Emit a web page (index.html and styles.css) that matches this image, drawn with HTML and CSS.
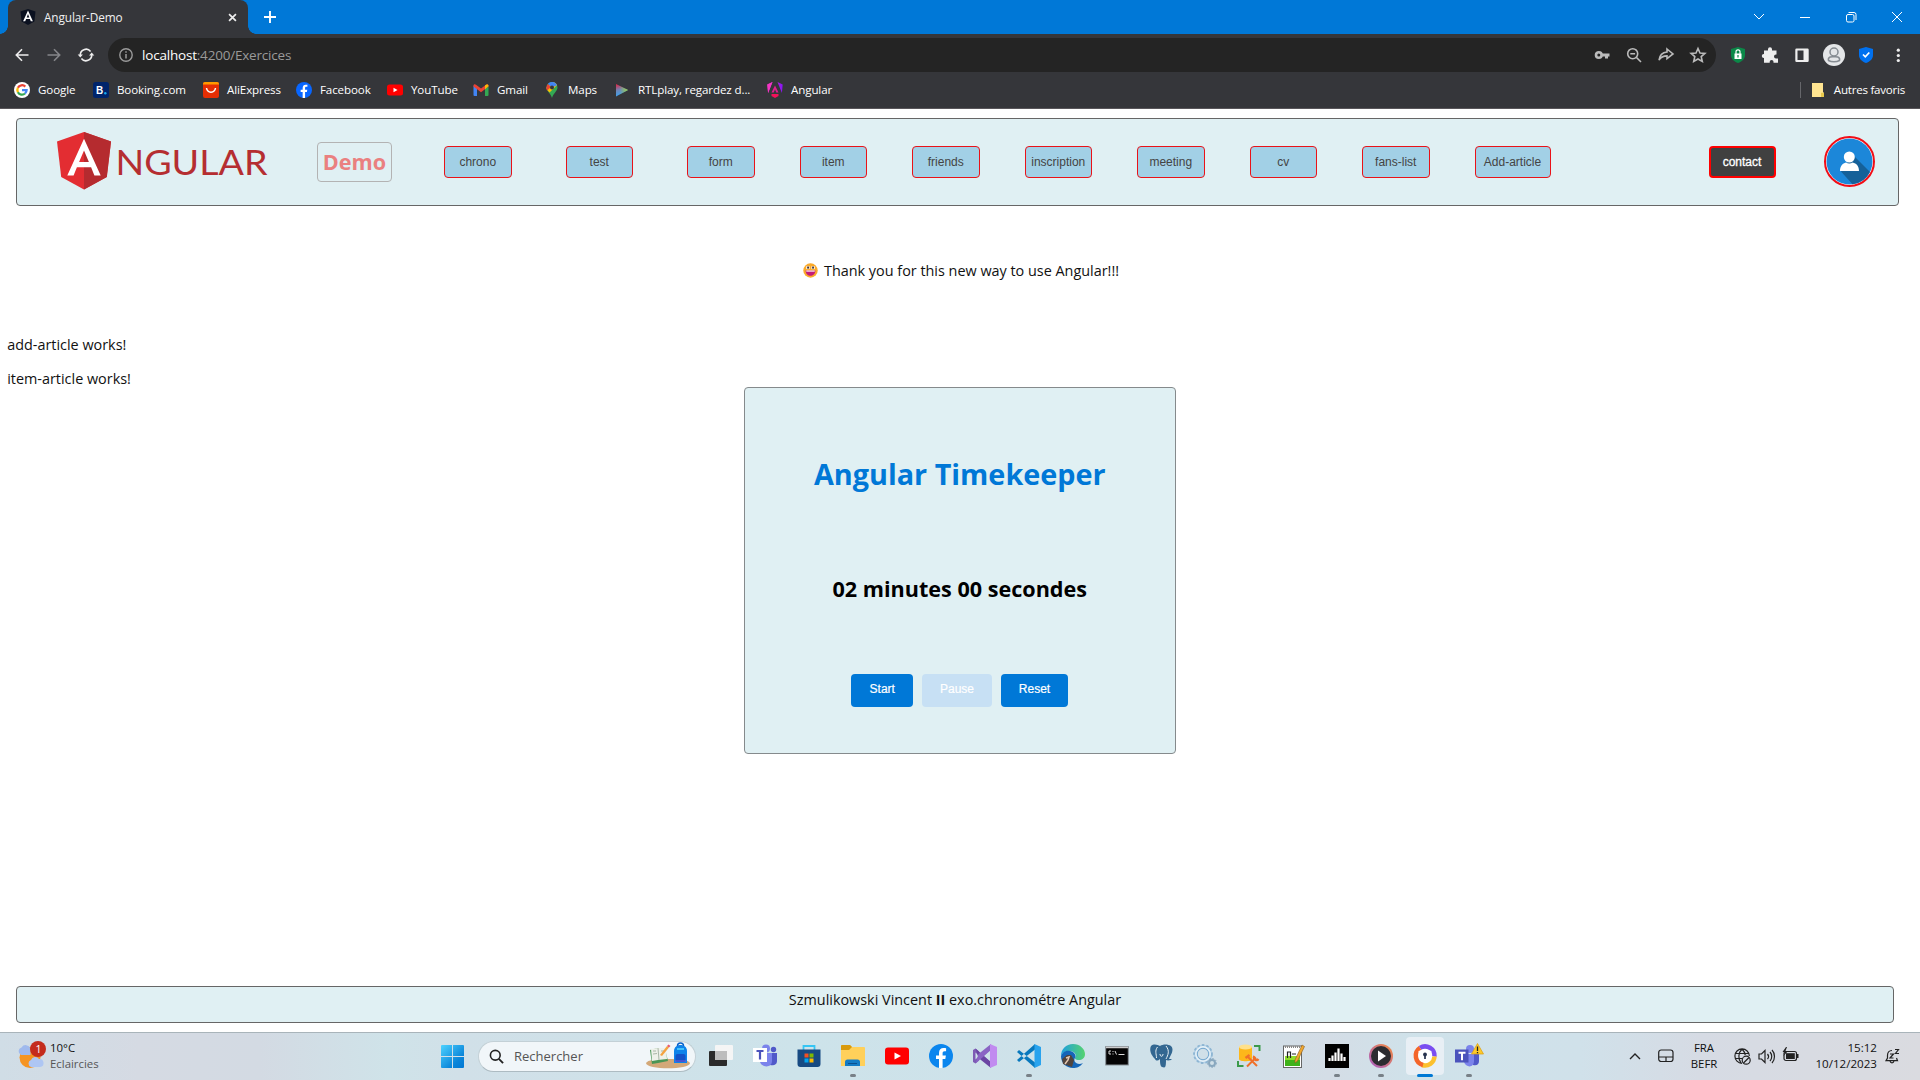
FILE: index.html
```html
<!DOCTYPE html>
<html lang="fr">
<head>
<meta charset="utf-8">
<title>Angular-Demo</title>
<link rel="stylesheet" href="styles.css">
</head>
<body>
<div class="screen">
<div class="tabstrip">
  <div class="tab">
    <svg class="i16" viewBox="0 0 16 16"><path d="M8 0l7.500 2.600-1.100 10L8 16l-6.400-3.400L.5 2.600z" fill="#0b1120"/><path d="M8 1.500L3.100 12.300h2.100l.9-2.400h3.800l.9 2.400h2.100zm0 3.600l1.300 3.300H6.700z" fill="#fff"/></svg>
    <span class="tab-title">Angular-Demo</span>
    <svg class="tab-close" viewBox="0 0 10 10"><path d="M1.200 1.200l7.600 7.600M8.800 1.200L1.200 8.800" stroke="#eee" stroke-width="1.900"/></svg>
  </div>
  <svg class="newtab" viewBox="0 0 12 12"><path d="M6 0v12M0 6h12" stroke="#fff" stroke-width="1.900"/></svg>
  <div class="wincontrols">
    <svg viewBox="0 0 12 12"><path d="M1 3l5 5 5-5" class="w"/></svg>
    <svg viewBox="0 0 12 12"><path d="M1 6.500h10" class="w"/></svg>
    <svg viewBox="0 0 12 12"><rect x="1.500" y="3.500" width="7.500" height="7.500" rx="1.500" class="w"/><path d="M3.500 1.500h5.500a2 2 0 0 1 2 2V9" class="w"/></svg>
    <svg viewBox="0 0 12 12"><path d="M1 1l10 10M11 1L1 11" class="w"/></svg>
  </div>
</div>
<div class="toolbar">
  <div class="navbtns">
    <svg viewBox="0 0 16 16"><path d="M14.500 8H2.500M8 2.300L2.300 8 8 13.700" class="s" stroke="#eee"/></svg>
    <svg viewBox="0 0 16 16"><path d="M1.500 8h12M8 2.300L13.700 8 8 13.700" class="s" stroke="#85868a"/></svg>
    <svg viewBox="0 0 16 16"><path d="M2.300 8.500A5.800 5.800 0 0 1 12.600 4.400M13.700 7.500A5.800 5.800 0 0 1 3.400 11.600" class="s" stroke="#eee"/><path d="M-.3 7.500h5.200L2.300 10.600zM16.300 8.500h-5.200l2.600-3.100z" fill="#eee"/></svg>
  </div>
  <div class="urlbar">
    <svg class="info" viewBox="0 0 14 14"><circle cx="7" cy="7" r="6.200" fill="none" stroke="#9a9a9a" stroke-width="1.400"/><path d="M7 6v4.500M7 3.300v1.500" stroke="#9a9a9a" stroke-width="1.500"/></svg>
    <span class="url"><b>localhost</b>:4200/Exercices</span>
    <div class="urlicons">
      <svg viewBox="0 0 16 16"><circle cx="4.800" cy="8" r="2.800" fill="none" stroke="#bbb" stroke-width="2.600"/><path d="M8 6.500h7.500v3h-1.500v2h-3v-2H8z" fill="#bbb"/></svg>
      <svg viewBox="0 0 16 16"><circle cx="6.700" cy="6.700" r="5" class="s" stroke="#bbb"/><path d="M10.500 10.500L15 15M4.300 6.700h4.800" class="s" stroke="#bbb"/></svg>
      <svg viewBox="0 0 16 16"><path d="M9 2l6 5-6 4.700V8.900C5.500 8.900 3 10 1 13c.5-4 3-7.500 8-8z" class="s" stroke="#bbb" stroke-width="1.300"/></svg>
      <svg viewBox="0 0 16 16"><path d="M8 1.500l2 4.500 4.900.4-3.700 3.200 1.100 4.900L8 12l-4.300 2.500 1.100-4.900L1.100 6.400 6 6z" class="s" stroke="#bbb" stroke-width="1.300"/></svg>
    </div>
  </div>
  <div class="exticons">
    <svg viewBox="0 0 16 16"><path d="M8 0l7 2v6c0 4-3 6.500-7 8-4-1.500-7-4-7-8V2z" fill="#0b8848"/><rect x="4.500" y="6.500" width="7" height="5.500" fill="#fff"/><path d="M6 7V4.800a2 2 0 0 1 4 0V7" fill="none" stroke="#fff" stroke-width="1.200"/><path d="M8 8v2.500" stroke="#0b8848" stroke-width="1.200"/></svg>
    <svg viewBox="0 0 16 16"><path d="M2 3.500h4V2.300a2 2 0 0 1 4 0v1.200h4.500v4H14a2 2 0 0 0 0 4h2v4.300h-4.500v-1a1.900 1.900 0 0 0-3.800 0v1H2V11h-.2a2 2 0 0 1 0-4H2z" fill="#eee"/></svg>
    <svg viewBox="0 0 16 16"><path d="M2.500 1.500h11a1.200 1.200 0 0 1 1.200 1.200v11a1.200 1.200 0 0 1-1.200 1.200h-11a1.200 1.200 0 0 1-1.200-1.200v-11a1.200 1.200 0 0 1 1.200-1.200zM3.500 3.500v9.500h6V3.500z" fill="#eee" fill-rule="evenodd"/></svg>
    <svg class="i22" viewBox="0 0 22 22"><circle cx="11" cy="11" r="11" fill="#e4e6e8"/><circle cx="11" cy="8" r="4" fill="none" stroke="#858b91" stroke-width="1.500"/><path d="M5.500 16.500c-1-4 3.500-4 5.500-3.800 2-.2 6.500-.2 5.500 3.800-3 1.700-8 1.700-11 0z" fill="none" stroke="#858b91" stroke-width="1.500"/></svg>
    <svg viewBox="0 0 16 16"><path d="M8 0l7 2v6c0 4-3 6.500-7 8-4-1.500-7-4-7-8V2z" fill="#0071f0"/><path d="M5 7.500l2.300 2.300L11.300 5.500" fill="none" stroke="#fff" stroke-width="1.700"/></svg>
    <svg viewBox="0 0 16 16"><g fill="#eee"><circle cx="8.300" cy="3.200" r="1.600"/><circle cx="8.300" cy="8.500" r="1.600"/><circle cx="8.300" cy="13.500" r="1.600"/></g></svg>
  </div>
</div>
<div class="bookmarks">
  <div class="bm bm-google"><svg class="i16" viewBox="0 0 16 16"><circle cx="8" cy="8" r="8" fill="#fff"/><g fill="none" stroke-width="2.300"><path d="M3.900 5.800A4.600 4.600 0 0 1 11.300 4.600" stroke="#ea4335"/><path d="M3.900 5.800A4.600 4.600 0 0 0 3.900 10.200" stroke="#fbbc05"/><path d="M3.900 10.200A4.600 4.600 0 0 0 11 11.500" stroke="#34a853"/><path d="M11 11.500A4.600 4.600 0 0 0 12.600 8.100H8" stroke="#4285f4"/></g></svg><span>Google</span></div>
  <div class="bm bm-booking"><svg class="i16" viewBox="0 0 16 16"><rect width="16" height="16" rx="2.500" fill="#00246b"/><text x="3" y="12" class="bk">B</text><circle cx="12.300" cy="11.300" r="1.200" fill="#17a9f0"/></svg><span>Booking.com</span></div>
  <div class="bm bm-ali"><svg class="i16" viewBox="0 0 16 16"><rect width="16" height="16" rx="2" fill="#e62e04"/><path d="M0 2.500V2a2 2 0 0 1 2-2h12a2 2 0 0 1 2 2v.5z" fill="#ff9a00"/><path d="M3.500 6c.8 5.500 8.200 5.500 9 0" fill="none" stroke="#fff" stroke-width="1.500"/></svg><span>AliExpress</span></div>
  <div class="bm bm-fb"><svg class="i16" viewBox="0 0 24 24"><circle cx="12" cy="12" r="12" fill="#0866ff"/><path d="M10 24v-9H7v-3.500h3V9c0-3.300 1.800-5 4.500-5 1 0 2 .1 2.600.3v3h-1.500c-1.500 0-2 .8-2 2v2.200h3.300L16.300 15h-2.700v9z" fill="#fff"/></svg><span>Facebook</span></div>
  <div class="bm bm-yt"><svg class="i16" viewBox="0 0 16 16"><rect y="2.500" width="16" height="11" rx="2.500" fill="#f00"/><path d="M6.500 5.700v4.600L10.500 8z" fill="#fff"/></svg><span>YouTube</span></div>
  <div class="bm bm-gmail"><svg class="i16" viewBox="0 0 16 16"><path d="M.5 3.500L4 6v8H1.500a1 1 0 0 1-1-1z" fill="#4285f4"/><path d="M12 6l3.500-2.500V13a1 1 0 0 1-1 1H12z" fill="#34a853"/><path d="M.5 4.500C.2 2 2 2 3 2.800L8 6.600l5-3.800c1-.8 2.800-.8 2.500 1.700L8 10.300z" fill="#ea4335"/><path d="M12 3.600l1-.8c1-.8 2.500-.5 2.500 1.200L12 7.200z" fill="#fbbc04"/></svg><span>Gmail</span></div>
  <div class="bm bm-maps"><svg class="i16" viewBox="0 0 16 16"><path d="M8 0a5.500 5.500 0 0 1 5.500 5.500C13.500 9 9.500 11 8 16 6.500 11 2.500 9 2.500 5.500A5.500 5.500 0 0 1 8 0z" fill="#34a853"/><path d="M8 0a5.500 5.500 0 0 1 5 3.200L5.500 10.500C4 9 2.500 7.500 2.500 5.500z" fill="#fbbc04"/><path d="M3.800 1.900L8 5.500l5-2.300A5.500 5.500 0 0 0 3.800 1.900z" fill="#4285f4"/><path d="M3.800 1.900L7 5 3 8.500C2 6.500 2.200 3.500 3.800 1.900z" fill="#ea4335"/><circle cx="8" cy="5.500" r="2" fill="#35363a"/></svg><span>Maps</span></div>
  <div class="bm bm-rtl"><svg class="i16" viewBox="0 0 16 16"><defs><linearGradient id="rtl" x1="0" y1="0" x2=".3" y2="1"><stop offset="0" stop-color="#e8203c"/><stop offset=".5" stop-color="#6f86b8"/><stop offset="1" stop-color="#36a5f5"/></linearGradient><linearGradient id="rt2"><stop offset=".3" stop-color="#a0c040" stop-opacity="0"/><stop offset="1" stop-color="#a8dc3c"/></linearGradient></defs><path d="M2 2l12 6-12 6.500z" fill="url(#rtl)"/><path d="M2 2l12 6-12 6.500z" fill="url(#rt2)"/></svg><span>RTLplay, regardez d...</span></div>
  <div class="bm bm-ng"><svg class="i16" viewBox="0 0 16 16"><defs><linearGradient id="ng"><stop offset="0" stop-color="#f02fc0"/><stop offset="1" stop-color="#8514f5"/></linearGradient></defs><path d="M5.500 0L.3 2.500l.8 8.500zM10.500 0l5.200 2.500-.8 8.500z" fill="url(#ng)"/><path d="M.3 2.500L5.500 0l-4.400 11z" fill="#f436c4"/><path d="M8 3.500l3.500 7H9.300L8 7.500l-1.300 3H4.500z" fill="#e01f90"/><path d="M4.500 12h7v2L8 16l-3.500-2z" fill="#f5105a"/></svg><span>Angular</span></div>
  <div class="bm-other"><svg class="folder" viewBox="0 0 12 14"><path d="M0 0h11v9.500h1V14H0z" fill="#ffe591"/><path d="M9 14V9.800h3V14z" fill="#e8c94c"/></svg><span>Autres favoris</span></div>
</div>

<main class="page">
  <header class="site-header">
    <svg class="logo" viewBox="0 0 212 58"><path d="M27 0l27 9.500-4.200 35.500L27 57.500 4.200 45 0 9.500z" fill="#e32d32"/><path d="M27 0l27 9.500-4.200 35.500L27 57.500z" fill="#b52b2f"/><path d="M27 6.700L10.300 43.500h6.300l3.300-8.300h14.200l3.300 8.300h6.300zM27 18.500L31.900 30H22.100z" fill="#fff" fill-rule="evenodd"/><text x="58.500" y="42.500" textLength="152" lengthAdjust="spacingAndGlyphs" class="wordmark">NGULAR</text></svg>
    <div class="demo">Demo</div>
    <nav class="links">
      <a class="l1">chrono</a><a class="l2">test</a><a class="l3">form</a><a>item</a><a>friends</a><a>inscription</a><a>meeting</a><a>cv</a><a>fans-list</a><a class="wide">Add-article</a>
    </nav>
    <a class="contact">contact</a>
    <svg class="avatar" viewBox="0 0 51 51"><circle cx="25.500" cy="25.500" r="24.500" fill="#fff" stroke="#f20d16" stroke-width="2"/><circle cx="25.500" cy="25.500" r="23" fill="#1c87d9"/><path d="M29 19L46 36A23 23 0 0 1 28.500 48.300L17 35.500z" fill="#156199"/><circle cx="25.300" cy="21" r="5.500" fill="#fff"/><path d="M16 35c0-5 2.500-7.500 6-8.500 2 1.200 4.600 1.200 6.600 0 4 1 6.400 3.500 6.400 8.500z" fill="#fff"/></svg>
  </header>
  <p class="thanks"><svg class="emoji" viewBox="0 0 16 16"><circle cx="8" cy="8" r="7.700" fill="#fbaa2b"/><rect x="3.500" y="3.500" width="3.500" height="3" fill="#fff"/><rect x="9" y="3.500" width="3.500" height="3" fill="#fff"/><rect x="4.500" y="3.800" width="1.800" height="2.200" fill="#302028"/><rect x="9.800" y="3.800" width="1.800" height="2.200" fill="#302028"/><path d="M2.800 8h10.400c0 7.500-10.400 7.500-10.400 0z" fill="#c41c78"/><path d="M3.500 8h9v1.200h-9z" fill="#fff"/></svg><span>Thank you for this new way to use Angular!!!</span></p>
  <p class="works">add-article works!</p>
  <p class="works second">item-article works!</p>
  <section class="card">
    <h1>Angular Timekeeper</h1>
    <h2>02 minutes 00 secondes</h2>
    <div class="buttons"><button class="start">Start</button><button class="pause">Pause</button><button class="reset">Reset</button></div>
  </section>
  <footer class="site-footer"><span>Szmulikowski Vincent <b>II</b> exo.chronométre Angular</span></footer>
</main>

<div class="taskbar">
  <div class="weather">
    <svg class="weather-icon" viewBox="0 0 28 28"><circle cx="13" cy="16.500" r="10.500" fill="#f59422"/><path d="M4 14a4 4 0 0 1 .5-7.500 5 5 0 0 1 9 1V14z" fill="#9fb9ed"/><path d="M14 26a3.700 3.700 0 0 1 0-7 4.500 4.500 0 0 1 8-1 4 4 0 0 1 1 8z" fill="#aec6f3"/><circle cx="21" cy="8" r="8" fill="#c42b1c"/><text x="18.500" y="12" class="badge">1</text></svg>
    <div class="wtext"><span>10°C</span><span class="muted">Eclaircies</span></div>
  </div>
  <div class="apps">
    <svg class="start-icon" viewBox="0 0 23 23"><defs><linearGradient id="win" x1="0" y1="0" x2="1" y2="1"><stop offset="0" stop-color="#4cd2ff"/><stop offset=".7" stop-color="#0a85d9"/><stop offset="1" stop-color="#0078d4"/></linearGradient></defs><path d="M0 1a1 1 0 0 1 1-1h10v11H0zM12 0h10a1 1 0 0 1 1 1v10H12zM0 12h11v11H1a1 1 0 0 1-1-1zM12 12h11v10a1 1 0 0 1-1 1H12z" fill="url(#win)"/></svg>
    <div class="search">
      <svg class="lens" viewBox="0 0 16 16"><circle cx="6.700" cy="6.700" r="5.200" fill="none" stroke="#222" stroke-width="1.700"/><path d="M10.500 10.500L15 15" stroke="#222" stroke-width="2"/></svg>
      <span>Rechercher</span>
      <svg class="school" viewBox="0 0 44 26"><path d="M0 20c2-3 9-4 22-4s20 1 22 4c0 7-44 7-44 0z" fill="#d3a878"/><path d="M4 7l8-2 7 1 3 12-10 2-6 1z" fill="#4a9655"/><path d="M5 6l7-1 8 0 1 11-9 1-6 1z" fill="#eef1ea"/><path d="M12 5l1 12M7 8l3 0M7 11l4-.5M15 8l3 0" stroke="#aab7a8"/><path d="M14 12L21 3l2 1.500L16 13z" fill="#f4a340"/><path d="M21 3l1.500-1.500L24.500 3 23 4.500z" fill="#e85a70"/><path d="M28 8c0-8 13-8 13 0v12h-13z" fill="#0c83ea"/><path d="M31.500 3c0-4 6-4 6 0" fill="none" stroke="#0b63c9" stroke-width="1.500"/><rect x="29.500" y="11" width="10" height="8" rx="2" fill="#1252c8"/><path d="M31 6h7" stroke="#45c2fa" stroke-width="2"/><path d="M29 18h11" stroke="#7b54d8"/></svg>
    </div>
    <div class="pins">
      <div class="pin"><svg viewBox="0 0 24 24"><rect x="6" y="1" width="18" height="15" rx="1" fill="#f5f5f5"/><rect y="7" width="18" height="15" rx="1" fill="#2b2b2b"/><path d="M6 7h12v9H6z" fill="#bdbdbd"/></svg></div>
      <div class="pin"><svg viewBox="0 0 24 24"><circle cx="13" cy="4.500" r="4" fill="#7b83eb"/><circle cx="20.500" cy="5.500" r="2.700" fill="#5059c9"/><path d="M15 9h9v8c0 4-4 5-7 4z" fill="#5059c9"/><path d="M7 9h12v8c0 7-10 7-12 1z" fill="#7b83eb"/><rect y="4" width="14" height="14" fill="#fff"/><path d="M3.500 7h7M7 7v8.500" stroke="#4b53bc" stroke-width="2.200"/></svg></div>
      <div class="pin"><svg viewBox="0 0 24 24"><path d="M6.500 6V2h11v4" fill="none" stroke="#35c5f4" stroke-width="1.800"/><path d="M.5 5.500h23V20a3 3 0 0 1-3 3h-17a3 3 0 0 1-3-3z" fill="#174a82"/><path d="M7.500 9.500h4v4h-4z" fill="#f25022"/><path d="M12.500 9.500h4v4h-4z" fill="#7fba00"/><path d="M7.500 14.500h4v4h-4z" fill="#00a4ef"/><path d="M12.500 14.500h4v4h-4z" fill="#ffb900"/></svg></div>
      <div class="pin run"><svg viewBox="0 0 24 24"><path d="M0 2a1 1 0 0 1 1-1h8l2 2h12a1 1 0 0 1 1 1v18H0z" fill="#ffd05a"/><path d="M0 6V2a1 1 0 0 1 1-1h8l2 2-3 3z" fill="#d99a0c"/><path d="M4 22v-4a2.500 2.500 0 0 1 2.500-2.500h10A2.500 2.500 0 0 1 19 18v4z" fill="#137bc5"/><path d="M7 19.500h9" stroke="#0a4f8f"/></svg></div>
      <div class="pin"><svg viewBox="0 0 24 24"><rect y="3.500" width="24" height="17" rx="3" fill="#f00"/><path d="M9.500 8.500v7L16 12z" fill="#fff"/></svg></div>
      <div class="pin"><svg viewBox="0 0 24 24"><circle cx="12" cy="12" r="12" fill="#0b86ee"/><path d="M10 24v-9H7v-3.500h3V9c0-3.300 1.800-5 4.500-5 1 0 2 .1 2.600.3v3h-1.500c-1.500 0-2 .8-2 2v2.200h3.300L16.300 15h-2.700v9z" fill="#fff"/></svg></div>
      <div class="pin"><svg viewBox="0 0 24 24"><path d="M0 6l2.500-1.500L6 7.500v9L2.500 19.500 0 18z" fill="#7e5bb5"/><path d="M2.500 8.500v7L6 12z" fill="#cfe1ea"/><path d="M2.500 4.500L18 18v6L5.500 14z" fill="#6a45a3"/><path d="M2.500 19.500L18 6V0L5.500 10z" fill="#8a64c4"/><path d="M17 0l7 3v18l-7 3z" fill="#c18bf0"/><path d="M17 7.500v9L11.500 12z" fill="#cfe1ea"/></svg></div>
      <div class="pin run"><svg viewBox="0 0 24 24"><path d="M0 8l2-2 16 12.500V24zM0 16l2 2L18 5.500V0z" fill="#0878bd"/><path d="M17.500 0L24 3v18l-6.500 3z" fill="#29a3ee"/></svg></div>
      <div class="pin"><svg viewBox="0 0 24 24"><defs><linearGradient id="eg"><stop offset="0" stop-color="#1f9fdf"/><stop offset="1" stop-color="#55d36e"/></linearGradient></defs><path d="M0 12C0 5 5 0 12 0c7 0 12 5 12 10 0 4-3 6-6 6-3.500 0-5-1.500-3.500-3C16 11 13 7 9 7S2 8 0 12z" fill="url(#eg)"/><path d="M0 12c2-5 6-6 9-5 3 .5 6 3 5.500 6C11 17 16 22 22 19c-3 4-6 5-10 5C5 24 0 19 0 12z" fill="#1565b8"/><path d="M1 15l5-4 4 0 3 5-2 7-9-3z" fill="#51443e"/><path d="M5 14l3-1-1 3-3 4" stroke="#e5c9b2" stroke-width="1.500" fill="none"/></svg></div>
      <div class="pin"><svg viewBox="0 0 24 24"><rect x=".7" y="2.500" width="22.600" height="18.500" fill="#050505" stroke="#8a9399"/><path d="M1 3.500h22" stroke="#ccc" stroke-width="1.500"/><path d="M6 7h-2v3h2M8 7v1M8 9.500v1M10 7l1.500 3.500M13.500 10.500h6" stroke="#ddd" fill="none"/></svg></div>
      <div class="pin"><svg viewBox="0 0 24 24"><path d="M2 2C5-1 9 1 11 2c3-2 8-2 11 0 4 4-1 10-2 13l3 0c-2 2-5 1.500-6 1 0 8-1 8-4 7-2-1-2-5-2-8-2 2-4 2-5 0C2 11 0 6 2 2z" fill="#336791"/><path d="M8.500 3c-3 4-1 7-1 11M17 2c4 5 2 9 0 13M11 10c0 3 3 3 3 0" fill="none" stroke="#e8f1f5" stroke-width="1"/></svg></div>
      <div class="pin"><svg viewBox="0 0 24 24"><circle cx="10" cy="10" r="7.500" fill="none" stroke="#b3d0e6" stroke-width="4"/><circle cx="10" cy="10" r="8.900" fill="none" stroke="#8eb6d3" stroke-width="2" stroke-dasharray="2.500 2"/><circle cx="10" cy="10" r="5.700" fill="none" stroke="#77a9d0"/><circle cx="10" cy="10" r="7.200" fill="none" stroke="#e5f1f8" stroke-width="1.500"/><circle cx="19" cy="19" r="3" fill="none" stroke="#88a7be" stroke-width="2"/><circle cx="19" cy="19" r="4.500" fill="none" stroke="#88a7be" stroke-dasharray="1.500 1.500"/></svg></div>
      <div class="pin"><svg viewBox="0 0 24 24"><path d="M2 3v12c0 3 13 3 13 0V3z" fill="#fdb71a"/><ellipse cx="8.500" cy="3" rx="6.500" ry="2.500" fill="#ffe08a"/><path d="M17 2h5.500v5M1 17v5h5.500" fill="none" stroke="#3b9a4a" stroke-width="2"/><path d="M10 12l10 10M19 13.500L10 22.500" fill="none" stroke="#f0702a" stroke-width="2"/><path d="M8.500 14l4-3M17.500 12a2.500 2.500 0 0 0 4 3" fill="none" stroke="#f0702a" stroke-width="2.300"/></svg></div>
      <div class="pin"><svg viewBox="0 0 24 24"><rect x="2.500" y="2" width="18" height="21.500" fill="#fff" stroke="#666"/><path d="M4 12h15v10H4z" fill="#8fdc2a"/><path d="M4 16h15v6H4z" fill="#3eb21a"/><path d="M4 3h15" stroke="#888" stroke-dasharray="1 1" stroke-width="2"/><path d="M6.500 14V8h3v6M11 10h4" fill="none" stroke="#222" stroke-width="1.200"/><path d="M14 16L21 1l2.500 1.500L16.500 17 14 19z" fill="#f0a72e" stroke="#8a5a20" stroke-width=".6"/></svg></div>
      <div class="pin run"><svg viewBox="0 0 24 24"><rect width="24" height="24"/><path d="M4.500 14v3M7.500 11.500V17M10.500 8.500V17M13.500 4.500V17M16.500 9.500V17M19.500 13v4" stroke="#fff" stroke-width="2.200"/></svg></div>
      <div class="pin run"><svg viewBox="0 0 24 24"><defs><linearGradient id="mp" x1="1" y1="0" x2="0" y2="1"><stop offset="0" stop-color="#f58b3c"/><stop offset="1" stop-color="#a65bc8"/></linearGradient></defs><circle cx="12" cy="12" r="12" fill="url(#mp)"/><circle cx="12" cy="12" r="10" fill="#2c2c30"/><path d="M9 6.500v11l8-5.500z" fill="#fff"/></svg></div>
      <div class="pin active"><svg viewBox="0 0 24 24"><circle cx="12" cy="12" r="9" fill="#fff"/><g fill="none" stroke-width="4.500"><path d="M7 3.900A9.500 9.500 0 0 1 21.500 12.500" stroke="#7a4df0"/><path d="M21.500 12.500A9.500 9.500 0 0 1 9 21" stroke="#fcc02e"/><path d="M10 21A9.500 9.500 0 0 1 7 3.900" stroke="#f4652a"/></g><path d="M12 5l6.500 2c0 5-1 8.500-6.500 12-5.500-3.500-6.500-7-6.500-12z" fill="#fff"/><circle cx="12" cy="10.500" r="1.900" fill="#26324d"/><path d="M12 11v4" stroke="#26324d" stroke-width="1.700"/></svg></div>
      <div class="pin run"><svg class="teams2" viewBox="0 0 28 24"><circle cx="15" cy="5" r="4" fill="#7b83eb"/><path d="M18 10h6v7c0 4-3 5-6 4z" fill="#5059c9"/><path d="M9 10h10v7c0 7-8 7-10 1z" fill="#7b83eb"/><rect y="5.500" width="13.500" height="13" fill="#4b53bc"/><path d="M3.500 8.700h7M7 8.700v7.500" stroke="#fff" stroke-width="2"/><path d="M22.500-.5L28.500 10h-12z" fill="#ffc928" stroke="#d89b10" stroke-width=".7"/><path d="M22.500 2.500V7M22.500 8v1.200" stroke="#222" stroke-width="1.300"/></svg></div>
    </div>
  </div>
  <div class="tray">
    <svg class="chev" viewBox="0 0 12 8"><path d="M1 7l5-5 5 5" fill="none" stroke="#222" stroke-width="1.400"/></svg>
    <svg class="pad" viewBox="0 0 16 14"><rect x=".7" y="1" width="14.300" height="11.500" rx="2.500" class="t"/><path d="M1 8h14M8 8v4.500" class="t"/></svg>
    <div class="lang"><span>FRA</span><span>BEFR</span></div>
    <svg class="i17" viewBox="0 0 17 17"><path d="M8 15.300A7.200 7.200 0 1 1 15.300 8M1 5.500h14M1 10.500h7M8 1C4 5 4 11 7 15M8 1c2 2 3 4 3.200 6" class="t"/><circle cx="12.200" cy="12.200" r="4" class="t"/><path d="M9.500 15l5.500-5.500" class="t"/></svg>
    <svg class="spk" viewBox="0 0 17 17"><path d="M1 6h2.500L7 2.500v12L3.500 11H1zM9.500 6c1.300 1.500 1.300 3.500 0 5M12 4c2.300 2.500 2.300 6.500 0 9M14 2c3.300 3.500 3.300 9.500 0 13" class="t"/></svg>
    <svg class="i17 bat" viewBox="0 0 17 17"><rect x="2" y="4.500" width="12.500" height="9" rx="2" class="t"/><rect x="4" y="6.200" width="8.800" height="5.800" fill="#222"/><path d="M15 7h1.500v4H15z" fill="#222"/><path d="M4 0L.5 5h2.300L1.500 9 6 4H3.500L5 0z" fill="#222"/></svg>
    <div class="clock"><span>15:12</span><span>10/12/2023</span></div>
    <svg class="bell" viewBox="0 0 15 16"><path d="M7 2.500c-3 0-4.500 2-4.500 5V10L1 12.700h11.500L11.500 10M5 13c.5 2.500 3.500 2.500 4 0M5 6h3.500L5 10h3.500M10 1.500h3.500L10.500 5.500H14" class="t"/></svg>
  </div>
</div>
</div>
</body>
</html>
```
FILE: styles.css
```css
* { box-sizing: border-box; }
body { margin: 0; background: #fff; font-family: "Open Sans", sans-serif; color: #111; }
svg { display: block; flex: none; overflow: visible; }
p, h1, h2 { margin: 0; }
.screen { width: 1920px; height: 1080px; display: flex; flex-direction: column; overflow: hidden; }
.i16 { width: 16px; height: 16px; }
.i17 { width: 17px; height: 17px; }
.s { fill: none; stroke-width: 1.6; }
.w { fill: none; stroke: #fff; stroke-width: 1; }
.t { fill: none; stroke: #222; stroke-width: 1.2; }

/* Browser chrome */
.tabstrip { height: 34px; background: #0078d7; display: flex; align-items: center; padding-left: 8px; flex: none; }
.tab { position: relative; width: 240px; height: 34px; background: #35363a; border-radius: 8px 8px 0 0; display: flex; align-items: center; padding: 0 11px 0 12px; }
.tab::before, .tab::after { content: ""; position: absolute; bottom: 0; width: 8px; height: 8px; }
.tab::before { left: -8px; background: radial-gradient(circle at 0 0, transparent 7.5px, #35363a 8px); }
.tab::after { right: -8px; background: radial-gradient(circle at 100% 0, transparent 7.5px, #35363a 8px); }
.tab-title { margin: -1px 0 0 8px; flex: 1; font-size: 11.8px; color: #f0f0f0; letter-spacing: -.1px; white-space: nowrap; }
.tab-close { width: 9px; height: 9px; }
.newtab { width: 12px; height: 12px; margin-left: 16px; }
.wincontrols { margin-left: auto; display: flex; gap: 34px; padding-right: 17px; height: 28px; align-items: center; }
.wincontrols svg { width: 12px; height: 12px; }
.toolbar { height: 42px; background: #35363a; display: flex; padding-top: 4px; align-items: flex-start; flex: none; }
.navbtns { width: 108px; height: 34px; display: flex; align-items: center; gap: 16px; padding-left: 14px; }
.navbtns svg, .urlicons svg { width: 16px; height: 16px; }
.urlbar { width: 1608px; height: 34px; border-radius: 17px; background: #242424; display: flex; align-items: center; padding: 0 10px 0 11px; }
.info { width: 14px; height: 14px; }
.url { margin-left: 9px; font-size: 13.5px; color: #9a9a9a; letter-spacing: -.2px; }
.url b { font-weight: 400; color: #fff; }
.urlicons { margin-left: auto; display: flex; gap: 16px; }
.exticons { flex: 1; height: 34px; display: flex; align-items: center; padding-left: 6px; }
.exticons svg { width: 16px; height: 16px; margin: 0 8px; }
.exticons .i22 { width: 22px; height: 22px; margin: 0 5px; }
.bookmarks { height: 33px; background: #35363a; border-bottom: 1px solid #59565a; display: flex; align-items: center; padding: 0 15px 4px 14px; font-size: 11.6px; color: #fff; flex: none; }
.bm { display: flex; align-items: center; gap: 8px; white-space: nowrap; letter-spacing: -.12px; }
.bm span, .bm-other span { margin-top: -2px; }
.bm-google { width: 79px; } .bm-booking { width: 110px; } .bm-ali { width: 93px; } .bm-fb { width: 91px; }
.bm-yt { width: 86px; } .bm-gmail { width: 71px; } .bm-maps { width: 70px; } .bm-rtl { width: 153px; }
.bk { font: bold 10px "Liberation Sans", sans-serif; fill: #fff; }
.bm-other { margin-left: auto; height: 16px; border-left: 1px solid #66676b; padding-left: 11px; display: flex; align-items: center; gap: 10px; letter-spacing: -.25px; }
.folder { width: 12px; height: 14px; }

/* Page */
.page { flex: 1; display: flex; flex-direction: column; font-size: 14.4px; }
.site-header { margin: 9px 0 0 16px; width: 1883px; height: 88px; flex: none; background: #e0f0f3; border: 1px solid #666; border-radius: 4px; display: flex; align-items: center; padding-left: 40px; }
.logo { width: 212px; height: 58px; margin-top: -2px; }
.wordmark { font: 35px Lato, sans-serif; fill: #b52e31; }
.demo { width: 75px; height: 40px; margin-left: 48px; border: 1px solid #b3b3b3; border-radius: 4px; color: #ea8080; font-weight: 700; font-size: 21.6px; line-height: 38px; text-align: center; }
.links { display: flex; margin-left: 52px; gap: 45px; }
.links a { width: 67.5px; height: 32px; border: 1px solid #ea1218; border-radius: 4px; background: #a2d0e6; color: #444; font: 12px/31px "Liberation Sans", sans-serif; text-align: center; }
.links .l1, .links .l2 { margin-right: 9px; }
.links .wide { width: 76px; }
.contact { width: 67px; height: 32px; margin-left: 158px; border: 2px solid #f00; border-radius: 4px; background: #404040; color: #fff; font: 12px/28px "Liberation Sans", sans-serif; text-align: center; -webkit-text-stroke: .3px #fff; }
.avatar { width: 51px; height: 51px; margin: -2px 0 0 48px; }
.thanks { margin-top: 54px; height: 20px; display: flex; align-items: center; gap: 6px; padding-left: 803px; white-space: nowrap; }
.emoji { width: 15px; height: 15px; }
.works { margin: 56px 0 0 7.2px; height: 18px; line-height: 18px; }
.works.second { margin-top: 16px; }
.card { margin: -1px 0 0 744px; width: 431.5px; height: 367px; background: #e0f0f3; border: 1px solid #858a8c; border-radius: 4px; display: flex; flex-direction: column; align-items: center; flex: none; }
.card h1 { margin-top: 66px; font-size: 28.8px; line-height: 40px; color: #0078d7; }
.card h2 { margin-top: 80px; font-size: 21.6px; line-height: 30px; color: #000; }
.buttons { margin-top: 70px; display: flex; gap: 8.5px; }
.buttons button { height: 32.5px; padding: 0 0 2px; border: 0; border-radius: 4px; background: #0078d7; color: #fff; font: 12px "Liberation Sans", sans-serif; -webkit-text-stroke: .2px #fff; }
.buttons .start { width: 62px; }
.buttons .pause { width: 70.5px; background: #c7e0f4; }
.buttons .reset { width: 67.5px; }
.site-footer { margin: auto 0 9px 16px; width: 1878px; height: 37px; border: 1px solid #666; border-radius: 4px; background: #e0f0f3; text-align: center; line-height: 25px; flex: none; }

/* Taskbar */
.taskbar { height: 48px; border-top: 1px solid #a9b4ba; display: flex; align-items: center; flex: none; padding-bottom: 1px; background: linear-gradient(90deg, #d0dde6, #d5dae3 140px, #d3dae3 260px, #cfe3e9 390px, #d1e0e8 460px, #cde3ea 800px, #cfe1e9 1150px, #d4dde6 1330px, #cfe2ea 1420px, #d0e1ea 1580px, #d6dbe4 1700px, #dadbe0); }
.weather { width: 441px; display: flex; padding-left: 17px; align-items: center; }
.weather-icon { width: 28px; height: 28px; margin-top: -3px; }
.badge { font: 10.5px "Open Sans", sans-serif; fill: #fff; }
.wtext { display: flex; flex-direction: column; margin-left: 5px; font-size: 11.4px; line-height: 16px; }
.muted { color: #555; }
.apps { display: flex; align-items: center; }
.start-icon { width: 23px; height: 23px; }
.search { width: 218px; height: 31px; margin: 0 3px 0 14px; border-radius: 16px; background: #f1f6f9; border: 1px solid #c3d0d6; border-bottom-color: #adbbc2; display: flex; align-items: center; padding: 0 5px 0 10px; font-size: 13px; color: #555; }
.lens { width: 15px; height: 15px; margin-right: 10px; }
.school { width: 44px; height: 26px; margin-left: auto; }
.pins { display: flex; }
.pin { position: relative; width: 44px; height: 46px; display: flex; align-items: center; justify-content: center; }
.pin svg { width: 24px; height: 24px; }
.pin .teams2 { width: 28px; }
.pin.run::after, .pin.active::after { content: ""; position: absolute; left: 19px; bottom: 2px; width: 6px; height: 3px; border-radius: 2px; background: #788087; }
.pin.active::after { left: 14px; width: 16px; background: #0078d4; }
.pin.active::before { content: ""; position: absolute; left: 3px; top: 4px; width: 38px; height: 38px; border-radius: 4px; background: #e8eff5; }
.pin.active svg { position: relative; }
.tray { margin-left: auto; display: flex; align-items: center; font-size: 11.4px; line-height: 16px; padding-right: 20px; }
.chev { width: 12px; height: 8px; margin-right: 17px; }
.pad { width: 16px; height: 14px; }
.lang, .clock { display: flex; flex-direction: column; }
.lang { width: 60px; align-items: center; }
.spk { width: 17px; height: 17px; margin: 0 7px; }
.bat { margin-top: -2px; }
.clock { width: 78px; align-items: flex-end; margin-right: 8px; font-size: 11.6px; }
.bell { width: 15px; height: 16px; }
```
